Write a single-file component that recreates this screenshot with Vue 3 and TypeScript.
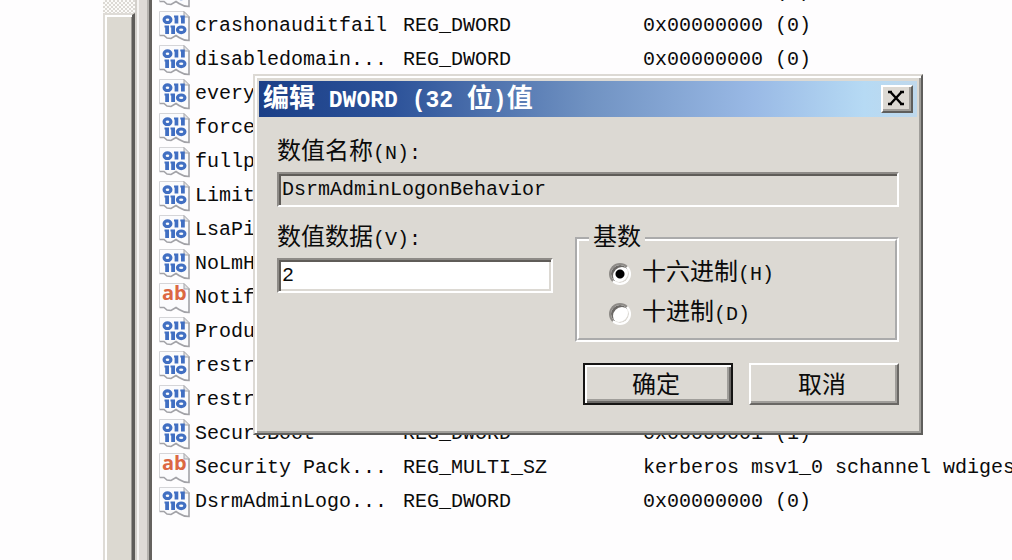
<script setup lang="ts">
import { ref } from 'vue'

interface RegistryValue {
  name: string
  kind: 'number' | 'text'
  type?: string
  data?: string
}

const values: RegistryValue[] = [
  { name: '', kind: 'number', type: 'REG_DWORD', data: '0x00000000 (0)' },
  { name: 'crashonauditfail', kind: 'number', type: 'REG_DWORD', data: '0x00000000 (0)' },
  { name: 'disabledomain...', kind: 'number', type: 'REG_DWORD', data: '0x00000000 (0)' },
  { name: 'every', kind: 'number' },
  { name: 'force', kind: 'number' },
  { name: 'fullp', kind: 'number' },
  { name: 'Limit', kind: 'number' },
  { name: 'LsaPi', kind: 'number' },
  { name: 'NoLmH', kind: 'number' },
  { name: 'Notif', kind: 'text' },
  { name: 'Produ', kind: 'number' },
  { name: 'restr', kind: 'number' },
  { name: 'restr', kind: 'number' },
  { name: 'SecureBoot', kind: 'number', type: 'REG_DWORD', data: '0x00000001 (1)' },
  { name: 'Security Pack...', kind: 'text', type: 'REG_MULTI_SZ', data: 'kerberos msv1_0 schannel wdigest' },
  { name: 'DsrmAdminLogo...', kind: 'number', type: 'REG_DWORD', data: '0x00000000 (0)' },
]

const valueName = ref('DsrmAdminLogonBehavior')
const valueData = ref('2')
const base = ref('hex')
</script>

<template>
  <main class="editor">
    <div class="tree"></div>
    <div class="scrollbar"><div class="thumb"></div></div>
    <div class="splitter"></div>
    <section class="list">
      <table>
        <colgroup>
          <col class="c-icon" />
          <col class="c-name" />
          <col class="c-type" />
          <col />
        </colgroup>
        <tbody>
          <tr v-for="(v, i) in values" :key="i">
            <td>
              <svg class="icon" viewBox="0 0 32 32" width="32" height="32" aria-hidden="true">
                <path d="M.5 1.5H25L30.5 7V31C25 31 23 30 20 28C17 26 15 26 12 28C8 30 6 25 .5 25Z" fill="#fbfbfd" />
                <path d="M.5 25V1.5H25" fill="none" stroke="#d5d5d8" />
                <path d="M25 1.5V7H30.5Z" fill="#e4e4e6" stroke="#a4a4a8" />
                <path d="M30 7V30.5C25 30.5 23 29.5 20 27.5L17 25.5L12 28.5L8 28L5 25.5H.5" fill="none" stroke="#a2a2a7" stroke-width="1.6" />
                <text v-if="v.kind === 'text'" x="3" y="18" class="ab">ab</text>
                <g v-else fill="#416fc2">
                  <ellipse cx="8.5" cy="9.7" rx="3.4" ry="2.8" fill="none" stroke="#416fc2" stroke-width="3.2" />
                  <path d="M15 5.5H19.3V13.5H15.6V7.5H15ZM21.3 5.5H25.8V13.5H22V7.5H21.3Z" />
                  <path d="M5.5 15.5H10V24H6.2V17.5H5.5ZM11.5 15.5H16V24H12.2V17.5H11.5Z" />
                  <ellipse cx="22.2" cy="19.8" rx="3.7" ry="2.8" fill="none" stroke="#416fc2" stroke-width="3.2" />
                </g>
              </svg>
            </td>
            <td>{{ v.name }}</td>
            <td>{{ v.type }}</td>
            <td>{{ v.data }}</td>
          </tr>
        </tbody>
      </table>
    </section>

    <form class="dialog" role="dialog" aria-labelledby="dialog-title" @submit.prevent>
      <header class="titlebar">
        <h1 id="dialog-title"><span class="han">编辑</span> DWORD (32 <span class="han">位</span>)<span class="han">值</span></h1>
        <button type="button" class="close" aria-label="关闭">
          <svg viewBox="0 0 18 16" width="18" height="16" aria-hidden="true">
            <path d="M1 2H5M13 2H17M1 14H5M13 14H17M3.5 2L14.5 14M14.5 2L3.5 14" fill="none" stroke="#000" stroke-width="2.4" />
          </svg>
        </button>
      </header>

      <div class="body">
        <div class="field">
          <label for="value-name">数值名称<span class="lat">(N):</span></label>
          <input id="value-name" v-model="valueName" class="readonly" type="text" readonly />
        </div>

        <div class="columns">
          <div class="field">
            <label for="value-data">数值数据<span class="lat">(V):</span></label>
            <input id="value-data" v-model="valueData" type="text" />
          </div>
          <fieldset>
            <legend>基数</legend>
            <div class="options">
              <label class="option"><input v-model="base" type="radio" name="base" value="hex" /><span>十六进制<span class="lat">(H)</span></span></label>
              <label class="option"><input v-model="base" type="radio" name="base" value="dec" /><span>十进制<span class="lat">(D)</span></span></label>
            </div>
          </fieldset>
        </div>

        <div class="actions">
          <button type="submit" class="btn default">确定</button>
          <button type="button" class="btn">取消</button>
        </div>
      </div>
    </form>
  </main>
</template>

<style>
body {
  background: #fefdfe;
}
</style>

<style scoped>
.editor {
  position: relative;
  display: grid;
  grid-template-columns: 103px 32px 17px minmax(0, 1fr);
  height: 100vh;
  overflow: hidden;
  background: #fefdfe;
  color: #0b0b0b;
  font: 20px/34px "Liberation Mono", "Noto Sans CJK SC", monospace;
}
.scrollbar {
  padding-top: 13px;
  background: repeating-conic-gradient(#dcd9d4 0 25%, #fcfbf9 0 50%) 0 0 / 4px 4px;
  display: flex;
}
.thumb {
  flex: 1;
  box-sizing: border-box;
  border: solid;
  border-width: 2px 3px 0 2px;
  border-color: #dedbd6 #5e5c59 #dedbd6 #dedbd6;
  background: #dcd9d1;
  box-shadow: inset 2px 2px #fff, inset -1px 0 #9b9893;
}
.splitter {
  box-sizing: border-box;
  border-right: 3px solid #65625f;
  background: #dedad6;
  box-shadow: inset 2px 0 #d3d0cb, inset 4px 0 #f6f4f2, inset -2px 0 #b5b2ae;
}
.list {
  overflow: hidden;
}
table {
  width: 100%;
  margin: -25px 0 0 7px;
  border-collapse: collapse;
  table-layout: fixed;
}
.c-icon { width: 36px; }
.c-name { width: 208px; }
.c-type { width: 240px; }
td {
  height: 34px;
  padding: 0;
  white-space: nowrap;
}
.icon {
  display: block;
}
.ab {
  font: bold 20px "Open Sans", "Noto Sans", sans-serif;
  fill: #dc6743;
}
.dialog {
  position: absolute;
  top: 74px;
  left: 253px;
  right: 89px;
  box-sizing: border-box;
  padding: 5px 4px 4px;
  border: 2px solid;
  border-color: #dcd9d4 #5f5e5c #5f5e5c #dcd9d4;
  background: #dcd9d3;
  box-shadow: inset 2px 2px #fff, inset -2px -2px #a09e9a;
}
.titlebar {
  display: flex;
  align-items: center;
  justify-content: space-between;
  height: 36px;
  padding: 0 4px;
  background: linear-gradient(90deg, #1b3f87, #2c5299 20%, #7092c2 50%, #99b9e5 75%, #b6daf4 92%, #bfd8ec);
}
h1 {
  margin: 0;
  padding-top: 4px;
  color: #fff;
  font: bold 23px/32px "Liberation Mono", "Noto Sans CJK SC", monospace;
  white-space: nowrap;
}
.han {
  font-size: 26px;
  line-height: 1;
}
.close {
  display: grid;
  place-items: center;
  width: 32px;
  height: 28px;
  padding: 0 2px 2px 0;
  border: 2px solid;
  border-color: #fff #5f5e5c #5f5e5c #fff;
  background: #dcd9d3;
  box-shadow: inset -2px -2px #a09e9a;
}
.body {
  padding: 19px 18px 24px;
  font-size: 24px;
  line-height: 34px;
}
.lat {
  font-size: 20px;
  line-height: 1;
}
.field {
  display: flex;
  flex-direction: column;
  gap: 2px;
}
input[type="text"] {
  box-sizing: border-box;
  width: 100%;
  height: 35px;
  padding: 0 3px;
  border: 2px solid;
  border-color: #8e8b87 #fff #fff #8e8b87;
  border-radius: 0;
  outline: 0;
  background: #fff;
  box-shadow: inset 2px 2px #5f5c58, inset -2px -2px #dcd9d3;
  color: inherit;
  font: 20px "Liberation Mono", monospace;
}
input.readonly {
  background: #dcd9d3;
  box-shadow: inset 2px 2px #5f5c58;
}
.columns {
  display: grid;
  grid-template-columns: 276px minmax(0, 1fr);
  gap: 22px;
  margin-top: 15px;
}
fieldset {
  min-width: 0;
  margin: 0;
  padding: 0 10px 6px;
  border: 4px groove #fff;
}
legend {
  padding: 0 4px;
}
.options {
  display: flex;
  flex-direction: column;
  gap: 4px;
  padding-left: 20px;
}
.option {
  display: flex;
  align-items: center;
  gap: 11px;
  height: 36px;
}
input[type="radio"] {
  appearance: none;
  width: 22px;
  height: 22px;
  margin: 0;
  border: 2px solid;
  border-color: #8e8b87 #fff #fff #8e8b87;
  border-radius: 50%;
  background: #fff;
  box-shadow: inset 2px 2px #6b6865, inset -1px -1px #dcd9d3;
}
input[type="radio"]:checked {
  background: radial-gradient(circle, #000 0 4px, #fff 5px);
}
.actions {
  display: flex;
  justify-content: flex-end;
  gap: 16px;
  margin-top: 21px;
}
.btn {
  width: 150px;
  height: 42px;
  padding: 0 4px 2px 0;
  border: 2px solid;
  border-color: #fff #6a6865 #6a6865 #fff;
  background: #dcd9d3;
  box-shadow: inset -2px -2px #a09e9a;
  color: inherit;
  font: 24px/36px "Noto Sans CJK SC", sans-serif;
}
.btn.default {
  border-color: #161514;
  box-shadow: inset 2px 2px #fff, inset -2px -2px #6a6865, inset -4px -4px #a09e9a;
}
</style>
